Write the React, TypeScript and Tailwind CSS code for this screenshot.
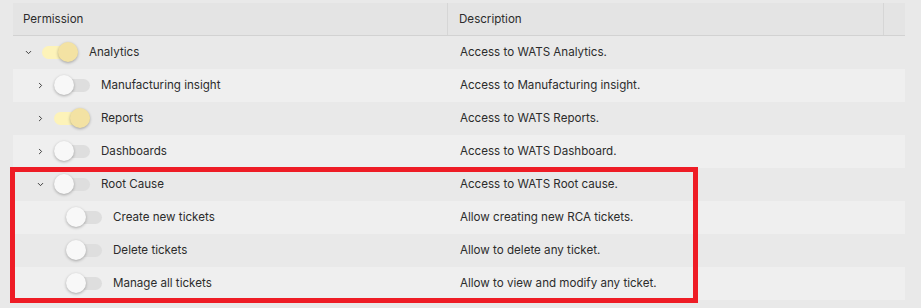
import { ChevronDown, ChevronRight } from 'lucide-react'

type Perm = {
  name: string
  desc: string
  level: number
  on: boolean
  chevron?: 'down' | 'right'
}

const perms: Perm[] = [
  { name: 'Analytics', desc: 'Access to WATS Analytics.', level: 0, on: true, chevron: 'down' },
  { name: 'Manufacturing insight', desc: 'Access to Manufacturing insight.', level: 1, on: false, chevron: 'right' },
  { name: 'Reports', desc: 'Access to WATS Reports.', level: 1, on: true, chevron: 'right' },
  { name: 'Dashboards', desc: 'Access to WATS Dashboard.', level: 1, on: false, chevron: 'right' },
  { name: 'Root Cause', desc: 'Access to WATS Root cause.', level: 1, on: false, chevron: 'down' },
  { name: 'Create new tickets', desc: 'Allow creating new RCA tickets.', level: 2, on: false },
  { name: 'Delete tickets', desc: 'Allow to delete any ticket.', level: 2, on: false },
  { name: 'Manage all tickets', desc: 'Allow to view and modify any ticket.', level: 2, on: false },
]

function Toggle({ on }: { on: boolean }) {
  return (
    <div className={`relative w-[36px] h-[13px] rounded-full shrink-0 ${on ? 'bg-[#fdf3b9]' : 'bg-[#dedede]'}`}>
      <div
        className={`absolute top-[-4px] w-[20px] h-[20px] rounded-full shadow-[0_1px_3px_rgba(0,0,0,0.3)] ${
          on ? 'right-0 bg-[#f3e2a3]' : 'left-0 bg-[#f8f8f8]'
        }`}
      />
    </div>
  )
}

export default function App() {
  return (
    <div
      className="relative w-[921px] h-[308px] bg-[#e9e9e9] pt-[3px] pl-[13px] text-[11.6px] text-[#2c2c2c]"
      style={{ fontFamily: 'Inter, "Noto Sans", sans-serif' }}
    >
      <div className="w-[892px]">
        {/* Header */}
        <div className="flex h-[33px] bg-[#e4e4e4] border-b border-[#d2d2d2]">
          <div className="w-[435px] flex items-center pl-[10px] pt-px border-r border-[#d6d6d6]">Permission</div>
          <div className="w-[436px] flex items-center pl-[11px] pt-px border-r border-[#d6d6d6]">Description</div>
          <div className="flex-1" />
        </div>

        {/* Rows */}
        {perms.map((p, i) => (
          <div key={p.name} className={`flex h-[33px] ${i % 2 === 1 ? 'bg-[#efefef]' : 'bg-[#e9e9e9]'}`}>
            <div className="w-[435px] flex items-center" style={{ paddingLeft: 11 + p.level * 12 }}>
              <div className="w-[18px] shrink-0 flex items-center">
                {p.chevron === 'down' && <ChevronDown size={9} strokeWidth={2.5} className="text-[#333]" />}
                {p.chevron === 'right' && <ChevronRight size={9} strokeWidth={2.5} className="text-[#333]" />}
              </div>
              <Toggle on={p.on} />
              <span className="ml-[11px] pt-px">{p.name}</span>
            </div>
            <div className="flex-1 flex items-center pl-[12px] pt-px">{p.desc}</div>
          </div>
        ))}
      </div>

      {/* highlight annotation */}
      <div className="absolute left-[10px] top-[167px] w-[688px] h-[136px] border-[5px] border-[#ee1c25] pointer-events-none" />
    </div>
  )
}
